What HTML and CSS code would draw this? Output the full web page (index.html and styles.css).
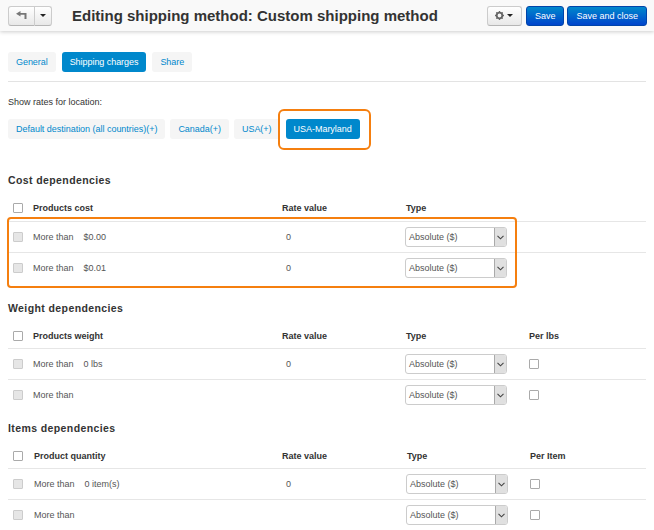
FILE: index.html
```html
<!DOCTYPE html>
<html lang="en">
<head>
    <meta charset="UTF-8">
    <title>Editing shipping method</title>
    <link rel="stylesheet" href="styles.css">
</head>
<body>
    <div class="toolbar">
        <div class="btn-group">
            <span class="tool-btn back">
                <svg width="11" height="9" viewBox="0 0 11 9"><path d="M4.5 0 L0 2.8 L4.5 5.6 L4.5 3.8 L8.5 3.8 L8.5 8 L10.5 8 L10.5 2 L4.5 2 Z" fill="#777"/></svg>
            </span>
            <span class="tool-btn caret-btn"><i class="caret"></i></span>
        </div>
        <h1 class="title">Editing shipping method: Custom shipping method</h1>
        <span class="tool-btn gear-btn">
            <svg width="9" height="9" viewBox="0 0 10 10"><circle cx="5" cy="5" r="3.1" fill="none" stroke="#666" stroke-width="2"/><path d="M5 0v2M5 8v2M0 5h2M8 5h2M1.5 1.5l1.4 1.4M7.1 7.1l1.4 1.4M1.5 8.5l1.4-1.4M7.1 2.9l1.4-1.4" stroke="#666" stroke-width="1.4"/></svg>
            <i class="caret"></i>
        </span>
        <span class="save-btn save-one">Save</span>
        <span class="save-btn">Save and close</span>
    </div>

    <div class="content">
        <div class="tabs">
            <a class="pill">General</a>
            <a class="pill active">Shipping charges</a>
            <a class="pill">Share</a>
        </div>

        <p class="show-rates">Show rates for location:</p>
        <div class="locations">
            <a class="pill">Default destination (all countries)(+)</a>
            <a class="pill">Canada(+)</a>
            <a class="pill">USA(+)</a>
            <a class="pill active">USA-Maryland</a>
        </div>

        <h2 class="dep-title cost-title">Cost dependencies</h2>
        <div class="dep-row dep-head tall">
            <span class="check"></span><span>Products cost</span><span>Rate value</span><span>Type</span><span></span>
        </div>
        <div class="dep-row">
            <span class="check off"></span>
            <span class="cond"><span>More than</span><span>$0.00</span></span>
            <span class="rate">0</span>
            <span class="select">Absolute ($)<i class="arrow"><svg width="7" height="5" viewBox="0 0 7 5"><path d="M0.5 0.8 L3.5 3.8 L6.5 0.8" fill="none" stroke="#444" stroke-width="1.1"/></svg></i></span>
            <span></span>
        </div>
        <div class="dep-row last">
            <span class="check off"></span>
            <span class="cond"><span>More than</span><span>$0.01</span></span>
            <span class="rate">0</span>
            <span class="select">Absolute ($)<i class="arrow"><svg width="7" height="5" viewBox="0 0 7 5"><path d="M0.5 0.8 L3.5 3.8 L6.5 0.8" fill="none" stroke="#444" stroke-width="1.1"/></svg></i></span>
            <span></span>
        </div>

        <h2 class="dep-title weight-title">Weight dependencies</h2>
        <div class="dep-row dep-head">
            <span class="check"></span><span>Products weight</span><span>Rate value</span><span>Type</span><span>Per lbs</span>
        </div>
        <div class="dep-row">
            <span class="check off"></span>
            <span class="cond"><span>More than</span><span>0 lbs</span></span>
            <span class="rate">0</span>
            <span class="select">Absolute ($)<i class="arrow"><svg width="7" height="5" viewBox="0 0 7 5"><path d="M0.5 0.8 L3.5 3.8 L6.5 0.8" fill="none" stroke="#444" stroke-width="1.1"/></svg></i></span>
            <span class="check"></span>
        </div>
        <div class="dep-row last">
            <span class="check off"></span>
            <span class="cond"><span>More than</span></span>
            <span class="rate"></span>
            <span class="select">Absolute ($)<i class="arrow"><svg width="7" height="5" viewBox="0 0 7 5"><path d="M0.5 0.8 L3.5 3.8 L6.5 0.8" fill="none" stroke="#444" stroke-width="1.1"/></svg></i></span>
            <span class="check"></span>
        </div>

        <h2 class="dep-title items-title">Items dependencies</h2>
        <div class="dep-row dep-head items">
            <span class="check"></span><span>Product quantity</span><span>Rate value</span><span>Type</span><span>Per Item</span>
        </div>
        <div class="dep-row items">
            <span class="check off"></span>
            <span class="cond"><span>More than</span><span>0 item(s)</span></span>
            <span class="rate">0</span>
            <span class="select">Absolute ($)<i class="arrow"><svg width="7" height="5" viewBox="0 0 7 5"><path d="M0.5 0.8 L3.5 3.8 L6.5 0.8" fill="none" stroke="#444" stroke-width="1.1"/></svg></i></span>
            <span class="check"></span>
        </div>
        <div class="dep-row items last">
            <span class="check off"></span>
            <span class="cond"><span>More than</span></span>
            <span class="rate"></span>
            <span class="select">Absolute ($)<i class="arrow"><svg width="7" height="5" viewBox="0 0 7 5"><path d="M0.5 0.8 L3.5 3.8 L6.5 0.8" fill="none" stroke="#444" stroke-width="1.1"/></svg></i></span>
            <span class="check"></span>
        </div>
    </div>

    <div class="mark mark-location"></div>
    <div class="mark mark-cost"></div>
</body>
</html>
```

FILE: styles.css
```css
html, body {
    height: 530px;
    overflow: hidden;
}
body {
    margin: 0;
    position: relative;
    background: #fff;
    color: #333;
    font-family: "Liberation Sans", Arial, sans-serif;
    font-size: 9px;
}

.toolbar {
    display: flex;
    align-items: center;
    height: 31px;
    padding: 0 7px 0 8px;
    background: #f9f9f9;
    box-shadow: 0 1px 4px rgba(0, 0, 0, 0.2);
}
.btn-group {
    display: flex;
}
.tool-btn {
    display: flex;
    align-items: center;
    justify-content: center;
    height: 20px;
    box-sizing: border-box;
    border: 1px solid #ccc;
    border-bottom-color: #b5b5b5;
    background: linear-gradient(to bottom, #fff, #e8e8e8);
    border-radius: 3px;
}
.back {
    width: 27px;
    border-radius: 3px 0 0 3px;
}
.caret-btn {
    width: 17px;
    border-left: 0;
    border-radius: 0 3px 3px 0;
}
.gear-btn {
    width: 35px;
    gap: 3px;
}
.caret {
    width: 0;
    height: 0;
    border-left: 3px solid transparent;
    border-right: 3px solid transparent;
    border-top: 3px solid #222;
}
.title {
    flex: 1;
    margin: 0 0 0 20px;
    font-size: 15px;
    font-weight: bold;
    color: #333;
    white-space: nowrap;
}
.save-btn {
    display: flex;
    align-items: center;
    justify-content: center;
    height: 20px;
    padding: 0 8px;
    margin-left: 3px;
    border: 1px solid #04a;
    border-radius: 3px;
    background: linear-gradient(to bottom, #0088cc, #0044cc);
    color: #fff;
    box-sizing: border-box;
}
.save-one {
    margin-left: 4px;
    min-width: 38px;
}

.content {
    padding: 21px 8px 0;
}
.tabs {
    display: flex;
    gap: 6px;
    padding-bottom: 9px;
    border-bottom: 1px solid #e3e3e3;
}
.pill {
    display: block;
    padding: 0 8px;
    height: 20px;
    line-height: 20px;
    border-radius: 3px;
    background: #f5f5f5;
    color: #0088cc;
    white-space: nowrap;
    letter-spacing: -0.05px;
}
.pill.active {
    background: #0088cc;
    color: #fff;
}
.show-rates {
    margin: 13px 0 0;
    height: 14px;
    line-height: 14px;
}
.locations {
    display: flex;
    gap: 5px;
    margin-top: 10px;
}
.locations .pill {
    letter-spacing: -0.025px;
}
.locations .pill.active {
    margin-left: 1px;
}

.dep-title {
    margin: 0;
    height: 14px;
    line-height: 14px;
    font-size: 10.5px;
    font-weight: bold;
    color: #333;
    letter-spacing: 0.4px;
}
.cost-title {
    margin-top: 34px;
}
.weight-title {
    margin-top: 18px;
}
.items-title {
    margin-top: 11px;
}

.dep-row {
    display: grid;
    grid-template-columns: 20px 249px 124px 123px 1fr;
    align-items: center;
    height: 31px;
    padding-left: 5px;
    border-bottom: 1px solid #e6e6e6;
    box-sizing: border-box;
    color: #555;
}
.dep-row.items {
    grid-template-columns: 21px 248px 125px 123px 1fr;
}
.dep-row.last {
    height: 30px;
    border-bottom: 0;
}
.dep-head {
    height: 26px;
    margin-top: 8px;
    font-weight: bold;
    color: #333;
}
.dep-head.tall {
    height: 27px;
}
.check {
    display: block;
    width: 8px;
    height: 8px;
    border: 1px solid #aaa;
    border-radius: 1px;
    background: #fff;
}
.check.off {
    background: #e6e6e6;
    border-color: #ccc;
}
.cond {
    display: flex;
    gap: 10px;
}
.rate {
    padding-left: 4px;
}
.select {
    display: flex;
    align-items: center;
    justify-content: space-between;
    box-sizing: border-box;
    width: 102px;
    height: 20px;
    margin-left: -1px;
    padding-left: 3px;
    border: 1px solid #ccc;
    border-radius: 3px;
    background: #fff;
    color: #555;
}
.arrow {
    display: flex;
    align-items: center;
    justify-content: center;
    width: 11px;
    height: 18px;
    border-left: 1px solid #aaa;
    background: #e0e0e0;
    border-radius: 0 2px 2px 0;
}

.mark {
    position: absolute;
    box-sizing: border-box;
    border: 2px solid #f57f0f;
    border-radius: 4px;
}
.mark-location {
    left: 278px;
    top: 109px;
    width: 93px;
    height: 41px;
    border-radius: 6px;
}
.mark-cost {
    left: 7px;
    top: 217px;
    width: 510px;
    height: 71px;
}
```
